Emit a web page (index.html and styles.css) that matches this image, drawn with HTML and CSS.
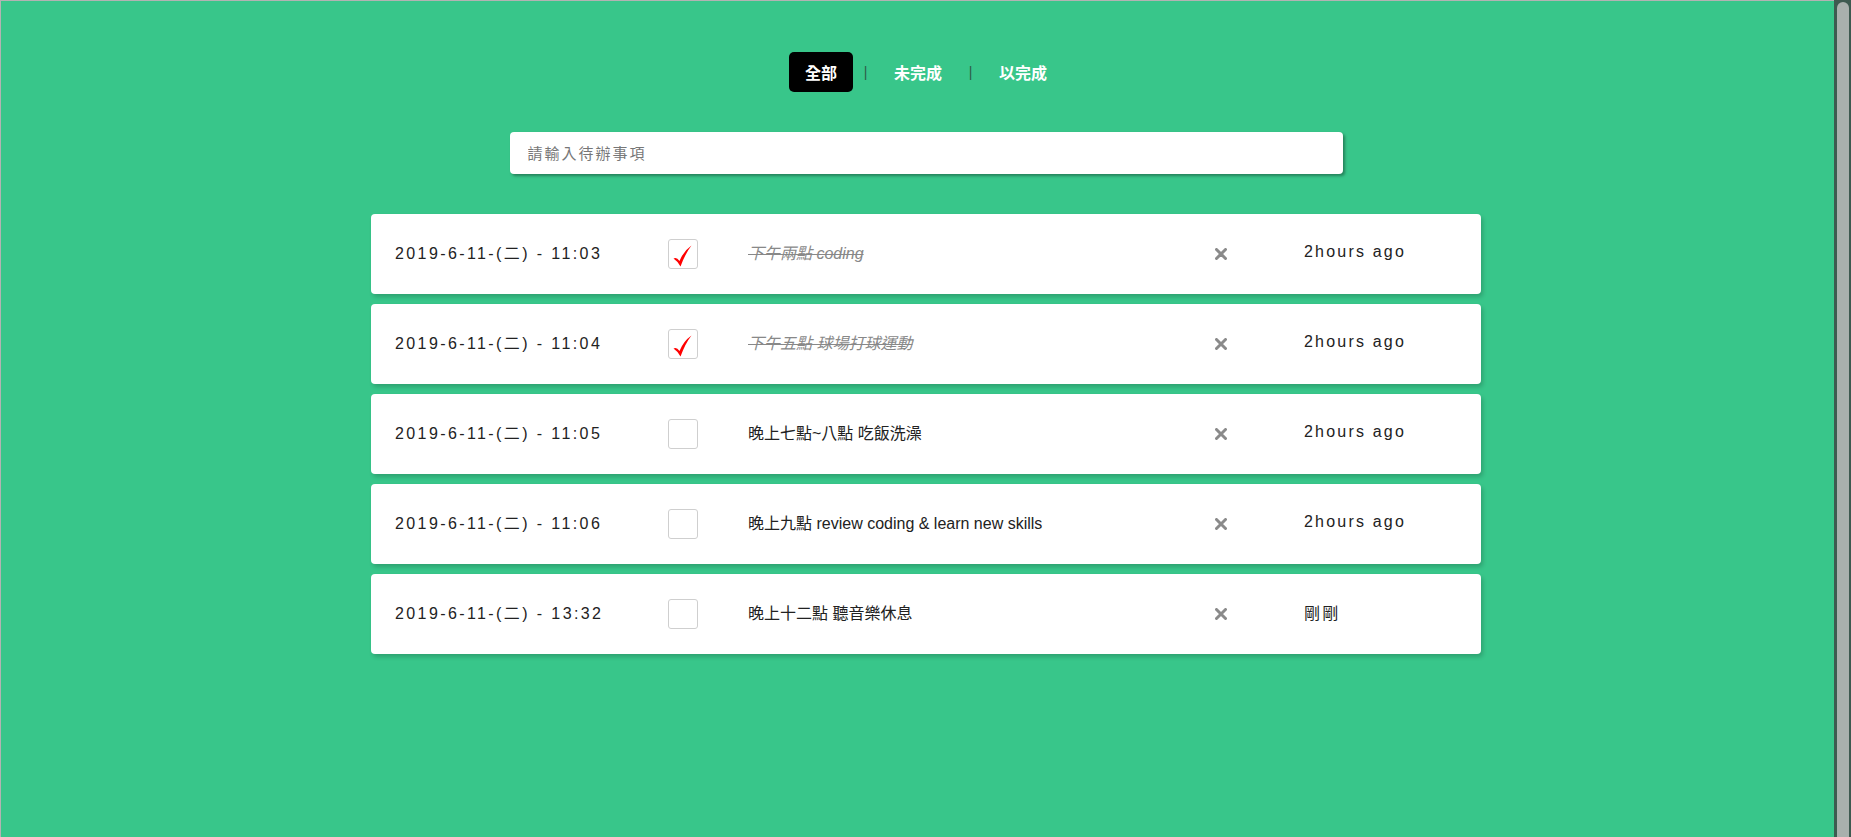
FILE: index.html
```html
<!DOCTYPE html>
<html lang="zh-Hant">
<head>
<meta charset="utf-8">
<title>Todo</title>
<link rel="stylesheet" href="styles.css">
</head>
<body>
<div class="page">
  <nav class="tabs">
    <span class="tab active">全部</span>
    <span class="sep">|</span>
    <span class="tab">未完成</span>
    <span class="sep">|</span>
    <span class="tab">以完成</span>
  </nav>
  <div class="input-wrap">
    <input class="todo-input" type="text" placeholder="請輸入待辦事項">
  </div>
  <ul class="list">
    <li class="card done">
      <span class="date">2019-6-11-(二) - 11:03</span>
      <span class="check"><svg viewBox="0 0 30 30" width="30" height="30"><path d="M5.5 19.5 Q8.5 17.5 11.5 22 Q15.5 12 23.5 6.5 Q17.5 14 12.5 27.5 Q10 22.5 5.5 19.5 Z" fill="#f00"/></svg></span>
      <span class="text">下午兩點 coding</span>
      <span class="del"><svg viewBox="0 0 12 12" width="12" height="12"><path d="M1.5 1.5 L10.5 10.5 M10.5 1.5 L1.5 10.5" stroke="#8a8a8a" stroke-width="3" stroke-linecap="round"/></svg></span>
      <span class="time">2hours ago</span>
    </li>
    <li class="card done">
      <span class="date">2019-6-11-(二) - 11:04</span>
      <span class="check"><svg viewBox="0 0 30 30" width="30" height="30"><path d="M5.5 19.5 Q8.5 17.5 11.5 22 Q15.5 12 23.5 6.5 Q17.5 14 12.5 27.5 Q10 22.5 5.5 19.5 Z" fill="#f00"/></svg></span>
      <span class="text">下午五點 球場打球運動</span>
      <span class="del"><svg viewBox="0 0 12 12" width="12" height="12"><path d="M1.5 1.5 L10.5 10.5 M10.5 1.5 L1.5 10.5" stroke="#8a8a8a" stroke-width="3" stroke-linecap="round"/></svg></span>
      <span class="time">2hours ago</span>
    </li>
    <li class="card">
      <span class="date">2019-6-11-(二) - 11:05</span>
      <span class="check"></span>
      <span class="text">晚上七點~八點 吃飯洗澡</span>
      <span class="del"><svg viewBox="0 0 12 12" width="12" height="12"><path d="M1.5 1.5 L10.5 10.5 M10.5 1.5 L1.5 10.5" stroke="#8a8a8a" stroke-width="3" stroke-linecap="round"/></svg></span>
      <span class="time">2hours ago</span>
    </li>
    <li class="card">
      <span class="date">2019-6-11-(二) - 11:06</span>
      <span class="check"></span>
      <span class="text">晚上九點 review coding &amp; learn new skills</span>
      <span class="del"><svg viewBox="0 0 12 12" width="12" height="12"><path d="M1.5 1.5 L10.5 10.5 M10.5 1.5 L1.5 10.5" stroke="#8a8a8a" stroke-width="3" stroke-linecap="round"/></svg></span>
      <span class="time">2hours ago</span>
    </li>
    <li class="card">
      <span class="date">2019-6-11-(二) - 13:32</span>
      <span class="check"></span>
      <span class="text">晚上十二點 聽音樂休息</span>
      <span class="del"><svg viewBox="0 0 12 12" width="12" height="12"><path d="M1.5 1.5 L10.5 10.5 M10.5 1.5 L1.5 10.5" stroke="#8a8a8a" stroke-width="3" stroke-linecap="round"/></svg></span>
      <span class="time">剛剛</span>
    </li>
  </ul>
</div>
<div class="scrollbar"><div class="thumb"></div></div>
</body>
</html>
```
FILE: styles.css
```css
html, body {
  margin: 0;
  padding: 0;
  height: 100%;
}
body {
  background: #38c68a;
  font-family: "Liberation Sans", Arial, "Noto Sans CJK TC", sans-serif;
  border-top: 1px solid #b3b3b3;
  border-left: 1px solid #b3b3b3;
  box-sizing: border-box;
  overflow: hidden;
}
.page {
  display: flex;
  flex-direction: column;
  align-items: center;
  padding-top: 51px;
}
.tabs {
  display: flex;
  align-items: center;
  height: 40px;
}
.tab {
  display: flex;
  align-items: center;
  height: 40px;
  padding: 0 16px;
  color: #fff;
  font-weight: bold;
  font-size: 16px;
  border-radius: 5px;
}
.tab.active {
  background: #000;
}
.sep {
  width: 25px;
  text-align: center;
  color: #2d5c48;
  font-size: 14px;
}
.input-wrap {
  margin-top: 40px;
  width: 833px;
}
.todo-input {
  display: block;
  width: 100%;
  height: 42px;
  box-sizing: border-box;
  border: none;
  border-radius: 4px;
  background: #fff;
  padding: 0 18px;
  font-family: "Liberation Sans", Arial, "Noto Sans CJK TC", sans-serif;
  font-size: 15px;
  letter-spacing: 2px;
  box-shadow: 2px 2px 3px rgba(0, 0, 0, 0.35);
  outline: none;
}
.todo-input::placeholder {
  color: #777;
}
.list {
  list-style: none;
  margin: 40px 0 0;
  padding: 0;
  width: 1110px;
  display: flex;
  flex-direction: column;
  gap: 10px;
}
.card {
  display: grid;
  grid-template-columns: 273px 80px 467px 89px 1fr;
  align-items: center;
  height: 80px;
  padding-left: 24px;
  background: #fff;
  border-radius: 4px;
  box-shadow: 2px 3px 4px rgba(0, 0, 0, 0.18);
  font-size: 16px;
  color: #222;
}
.date {
  letter-spacing: 2.4px;
  margin-top: -4px;
}
.check {
  width: 30px;
  height: 30px;
  box-sizing: border-box;
  border: 1px solid #cfcfcf;
  border-radius: 3px;
  position: relative;
}
.check svg {
  position: absolute;
  left: -1px;
  top: -1px;
}
.text {
  color: #222;
  margin-top: -4px;
}
.done .text {
  color: #888;
  font-style: italic;
  text-decoration: line-through;
}
.del {
  display: flex;
  align-items: center;
}
.time {
  letter-spacing: 2.2px;
  margin-top: -4px;
}
.scrollbar {
  position: fixed;
  top: 0;
  right: 0;
  width: 17px;
  height: 100%;
  background: #3e5a50;
  padding: 2px 2px 0 3px;
  box-sizing: border-box;
}
.thumb {
  width: 100%;
  height: 100%;
  background: #a9b0ad;
  border-radius: 6px 6px 0 0;
}
```
